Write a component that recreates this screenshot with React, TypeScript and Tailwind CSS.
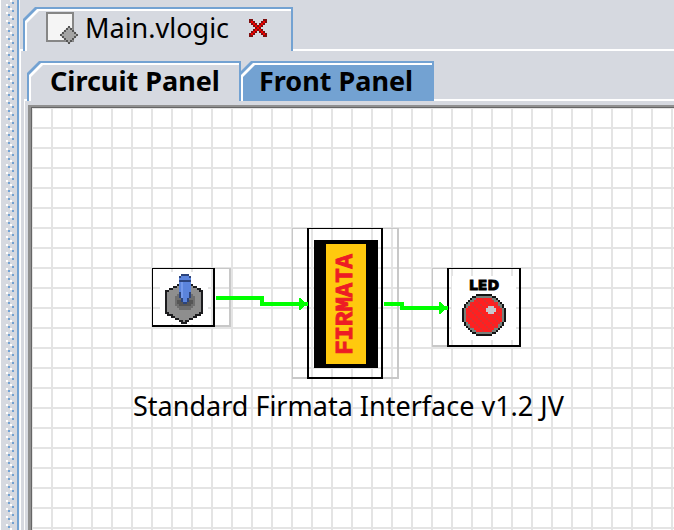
import React from "react";

function Grip() {
  return (
    <div className="flex w-[20px] shrink-0 border-l border-r border-l-white border-r-[#f3f5f8] bg-[#d6d9e0]">
      <div className="flex-1">
        <svg className="h-full w-full" shapeRendering="crispEdges" aria-hidden="true">
          <defs>
            <pattern id="grip" width="16" height="8" patternUnits="userSpaceOnUse">
              <rect x="5" y="4" width="2" height="2" fill="#fff" />
              <rect x="7" y="6" width="2" height="2" fill="#73a2d2" />
              <rect x="9" y="0" width="2" height="2" fill="#fff" />
              <rect x="11" y="2" width="2" height="2" fill="#73a2d2" />
            </pattern>
          </defs>
          <rect width="16" height="100%" fill="url(#grip)" />
        </svg>
      </div>
      <div className="w-[2px] bg-[#73a2d2]" />
    </div>
  );
}

function FileIcon() {
  return (
    <svg width="32" height="32" viewBox="0 0 32 32" aria-hidden="true">
      <rect x="1" y="1" width="26" height="28" fill="#f5f5f5" stroke="#868686" strokeWidth="2" />
      <path d="M23 14 L32 23 L23 32 L14 23Z" fill="#a4a4a4" />
      <path
        d="M22 14h2v2h-2zM20 16h2v2h-2zM24 16h2v2h-2zM18 18h2v2h-2zM26 18h2v2h-2zM16 20h2v2h-2zM28 20h2v2h-2zM14 22h2v2h-2zM30 22h2v2h-2zM16 24h2v2h-2zM28 24h2v2h-2zM18 26h2v2h-2zM26 26h2v2h-2zM20 28h2v2h-2zM24 28h2v2h-2zM22 30h2v2h-2z"
        fill="#555"
        shapeRendering="crispEdges"
      />
    </svg>
  );
}

type PixelArtProps = {
  rows: string[];
  colors: Record<string, string>;
  className?: string;
};

// Draws one 2px square for each letter that has a colour.
function PixelArt({ rows, colors, className }: PixelArtProps) {
  const w = rows[0].length;
  const h = rows.length;
  return (
    <svg
      className={className}
      width={w * 2}
      height={h * 2}
      viewBox={`0 0 ${w} ${h}`}
      shapeRendering="crispEdges"
      aria-hidden="true"
    >
      {rows.map((row, y) =>
        row
          .split("")
          .map((c, x) =>
            colors[c] ? <rect key={`${x}-${y}`} x={x} y={y} width="1" height="1" fill={colors[c]} /> : null,
          ),
      )}
    </svg>
  );
}

const closeRows = [
  "DD.....DD",
  "DRD...DRD",
  ".DRD.DRD.",
  "..DRDRD..",
  "...DRD...",
  "..DRDRD..",
  ".DRD.DRD.",
  "DRD...DRD",
  "DD.....DD",
];

const switchRows = [
  "........NNNN.......",
  ".......NBBBBN......",
  ".......BBBBBB......",
  ".......NNNNNN......",
  ".......BLBBBB......",
  "......KBLBBBBK.....",
  "....KKGBLBBBBGKK...",
  "..KKGGGBLBBBBGGGKK.",
  "KKGGGGGBLBBBBGGGGKK",
  "KGGGGGGNLBBBNGGGGGK",
  "KGGGGGDNLBBBNDGGGGK",
  "KGGGGDDNLBBBNDDGGGK",
  "KGGGGDDDNBBNDDDGGGK",
  "KGGGGDEENBBNEEDGGGK",
  "KGGGGDEEENNEEEDGGGK",
  "KGGGGDDEEEEEEDDGGGK",
  "KGGGGGDDDDDDDDGGGGK",
  "KGGGGGGDDDDDDGGGGGK",
  "KGGGGGGGGGGGGGGGGGK",
  "KKGGGGGGGGGGGGGGGKK",
  ".KKKGGGGGGGGGGGKKK.",
  "...KKGGGGGGGGGKK...",
  ".....KKGGGGGKK.....",
  ".......KKGKK.......",
  "........KKK........",
];

const switchColors = {
  K: "#1c1c1e",
  G: "#8e8e8e",
  D: "#6e6e6e",
  E: "#555555",
  N: "#2c447c",
  B: "#5b84dc",
  L: "#7499ea",
};

function ledCell(x: number, y: number) {
  const d = Math.hypot((x - 10.5) / 11.1, (y - 10) / 10.6);
  if (d > 1) return ".";
  if (d > 0.91) return "K";
  if (d > 0.82) return "G";
  const inGlint = x >= 12 && x <= 16 && y >= 6 && y <= 9;
  const glintCorner = (x === 12 || x === 16) && (y === 6 || y === 9);
  if (inGlint && !glintCorner) return "W";
  return (x * 3 + y * 5) % 4 === 0 ? "D" : "R";
}

const ledRows = Array.from({ length: 21 }, (_, y) =>
  Array.from({ length: 22 }, (_, x) => ledCell(x, y)).join(""),
);

function SwitchNode() {
  return (
    <>
      <div className="absolute left-[120px] top-[160px] h-[59px] w-[79px] border-b-2 border-r-2 border-t border-[#c8c8c8]" />
      <div className="absolute left-[120px] top-[160px] h-[59px] w-[63px] border-b-2 border-l border-r-2 border-t border-black pl-[7px] pt-[3px]">
        <div className="flex h-[52px] w-[48px] justify-center bg-white pt-[2px]">
          <PixelArt rows={switchRows} colors={switchColors} />
        </div>
      </div>
    </>
  );
}

function FirmataNode() {
  return (
    <>
      <div className="absolute left-[260px] top-[120px] h-[151px] w-[107px] border-b-2 border-l border-r-2 border-t border-[#c8c8c8]" />
      <div className="absolute left-[275px] top-[120px] flex h-[151px] w-[76px] border-b-2 border-l-2 border-r-2 border-t border-black pl-[5px] pt-[11px]">
        <div className="h-[128px] w-[64px] bg-black px-[12px] py-[4px]">
          <div className="flex h-full items-center justify-center bg-[#ffc90e]">
            <span className="rotate-180 font-['Liberation_Mono',monospace] text-[24px] font-bold leading-[24px] text-[#ed1c24] [-webkit-text-stroke:1px_#ed1c24] [writing-mode:vertical-rl]">
              FIRMATA
            </span>
          </div>
        </div>
      </div>
    </>
  );
}

function LedNode() {
  return (
    <>
      <div className="absolute left-[400px] top-[160px] h-[79px] w-[40px] border-b-2 border-l border-t border-[#c8c8c8]" />
      <div className="absolute left-[415px] top-[160px] h-[79px] w-[74px] border-b-2 border-l-2 border-r-2 border-t border-black px-[3px] pt-[7px]">
        <div className="flex h-[64px] w-[64px] flex-col items-center bg-white">
          <span className="font-['DejaVu_Sans',sans-serif] text-[14px] font-bold leading-[18px] text-black [-webkit-text-stroke:1px_#000]">
            LED
          </span>
          <PixelArt
            rows={ledRows}
            colors={{ K: "#141414", G: "#78807a", R: "#ff2020", D: "#dc3030", W: "#c8c8cc" }}
          />
        </div>
      </div>
    </>
  );
}

function Wires() {
  return (
    <svg className="absolute left-0 top-0" width="520" height="260" viewBox="32 108 520 260" shapeRendering="crispEdges" aria-hidden="true">
      <path d="M216 296h48v6h44v4h-48v-6h-44z" fill="#00ff00" />
      <path d="M299 298h1l6 6l-6 6h-1z" fill="#00ff00" />
      <path d="M384 302h20v4h44v4h-48v-4h-16z" fill="#00ff00" />
      <path d="M439 302h1l6 6l-6 6h-1z" fill="#00ff00" />
    </svg>
  );
}

function Canvas() {
  return (
    <main className="flex flex-1 border-l-[3px] border-t-2 border-[#909090]">
      <div className="relative flex-1 overflow-hidden border-l border-t border-[#666] bg-white bg-[linear-gradient(to_right,transparent_18px,#e4e4e4_18px),linear-gradient(to_bottom,transparent_18px,#e4e4e4_18px)] bg-[length:20px_20px] bg-[position:1px_1px]">
        <SwitchNode />
        <FirmataNode />
        <LedNode />
        <Wires />
        <p className="absolute left-[101px] top-[280px] whitespace-nowrap text-[27px] leading-[36px]">
          Standard Firmata Interface v1.2 JV
        </p>
      </div>
    </main>
  );
}

const cut = "[clip-path:polygon(12px_0,100%_0,100%_100%,0_100%,0_12px)]";

export default function App() {
  return (
    <div className="flex min-h-screen bg-[#d6d9e0] font-['Noto_Sans',sans-serif] text-black">
      <Grip />
      <div className="flex min-w-0 flex-1 flex-col pt-[7px]">
        <div className="flex h-[44px]" role="tablist" aria-label="Files">
          <div className="w-[3px] border-b-2 border-white" />
          <div className={`flex w-[270px] bg-[#73a2d2] pl-[2px] pr-[2px] pt-[2px] ${cut}`}>
            <div className={`flex flex-1 bg-white pl-[2px] pt-[2px] ${cut}`}>
              <div className={`flex flex-1 bg-[#d6d9e0] pl-[19px] ${cut}`}>
                <div className="flex h-[34px] items-center">
                  <FileIcon />
                  <button role="tab" aria-selected="true" className="ml-[7px] text-[27px] leading-[34px]">
                    Main.vlogic
                  </button>
                  <button aria-label="Close Main.vlogic" className="ml-[20px]">
                    <PixelArt rows={closeRows} colors={{ D: "#7d1010", R: "#f80000" }} />
                  </button>
                </div>
              </div>
            </div>
          </div>
          <div className="flex-1 border-b-2 border-white" />
        </div>
        <div className="flex flex-1 flex-col border-l border-white pt-[10px]">
          <div className="flex h-[40px]" role="tablist" aria-label="Panels">
            <div className="w-[6px] pl-[3px]">
              <div className="h-full border-b-2 border-white" />
            </div>
            <button role="tab" aria-selected="true" className={`flex w-[214px] bg-[#73a2d2] pl-[2px] pr-[2px] pt-[2px] ${cut}`}>
              <span className={`flex flex-1 bg-white pl-[2px] pt-[2px] ${cut}`}>
                <span className={`flex-1 bg-[#d6d9e0] pl-[19px] text-left text-[27px] font-bold leading-[32px] ${cut}`}>
                  Circuit Panel
                </span>
              </span>
            </button>
            <button role="tab" aria-selected="false" className={`-ml-[2px] flex w-[195px] bg-[#73a2d2] pl-[2px] pr-[2px] pt-[2px] ${cut}`}>
              <span className={`flex flex-1 bg-white pl-[2px] pt-[2px] ${cut}`}>
                <span className={`flex-1 bg-[#73a2d2] pl-[16px] text-left text-[27px] font-bold leading-[32px] ${cut}`}>
                  Front Panel
                </span>
              </span>
            </button>
            <div className="flex-1 border-b-2 border-white" />
          </div>
          <div className="flex flex-1 pl-[3px]">
            <div className="flex flex-1 border-l border-white pl-[3px] pt-[4px]">
              <Canvas />
            </div>
          </div>
        </div>
      </div>
    </div>
  );
}
